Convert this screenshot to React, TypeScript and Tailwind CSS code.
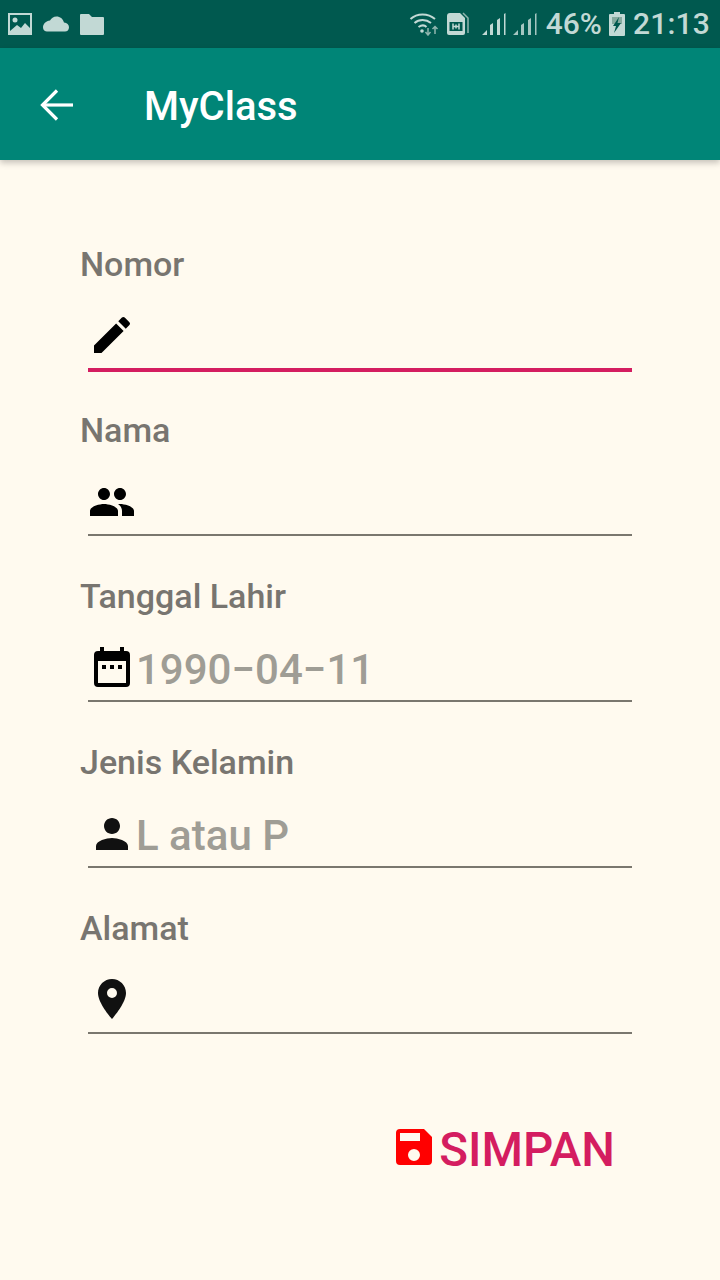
const font = { fontFamily: "Roboto, sans-serif" };

function Field({ label, icon, placeholder, active }: { label: string; icon: React.ReactNode; placeholder?: string; active?: boolean }) {
  return (
    <div className="h-[166px] flex flex-col">
      <div className="h-[40px] shrink-0 pl-[80px] text-[34px] leading-[40px] font-medium text-[#787570]">{label}</div>
      <div className={`ml-[88px] w-[544px] shrink-0 flex items-end ${active ? "h-[88px] pb-[9px] border-b-[4px] border-[#d41d60]" : "h-[86px] pb-[8px] border-b-2 border-[#7a776e]"}`}>
        <div className="w-[48px] h-[48px] flex items-center justify-center shrink-0">{icon}</div>
        {placeholder && <span className="text-[42px] leading-[52px] font-medium text-[#9f9d95] relative top-[4px]">{placeholder}</span>}
      </div>
    </div>
  );
}

const Edit = () => (
  <svg width="48" height="48" viewBox="0 0 24 24" fill="#000"><path d="M3 17.25V21h3.75L17.81 9.94l-3.75-3.75L3 17.25zM20.71 7.04a1 1 0 0 0 0-1.41l-2.34-2.34a1 1 0 0 0-1.41 0l-1.83 1.83 3.75 3.75 1.83-1.83z" /></svg>
);
const People = () => (
  <svg width="48" height="48" viewBox="0 0 24 24" fill="#000"><path d="M16 11c1.66 0 2.99-1.34 2.99-3S17.66 5 16 5s-3 1.34-3 3 1.34 3 3 3zm-8 0c1.66 0 2.99-1.34 2.99-3S9.66 5 8 5 5 6.34 5 8s1.34 3 3 3zm0 2c-2.33 0-7 1.17-7 3.5V19h14v-2.5C15 14.17 10.33 13 8 13zm8 0c-.29 0-.62.02-.97.05 1.16.84 1.97 1.97 1.97 3.45V19h6v-2.5c0-2.33-4.67-3.5-7-3.5z" /></svg>
);
const Calendar = () => (
  <svg width="48" height="48" viewBox="0 0 24 24" fill="#000" className="relative top-[-1px]"><path d="M19 4h-1V2h-2v2H8V2H6v2H5a2 2 0 0 0-2 2v14a2 2 0 0 0 2 2h14a2 2 0 0 0 2-2V6a2 2 0 0 0-2-2zm0 16H5V9h14v11zM7 11h2v2H7v-2zm4 0h2v2h-2v-2zm4 0h2v2h-2v-2z" /></svg>
);
const Person = () => (
  <svg width="48" height="48" viewBox="0 0 24 24" fill="#111"><path d="M12 12c2.21 0 4-1.790 4-4s-1.790-4-4-4-4 1.790-4 4 1.790 4 4 4zm0 2c-2.670 0-8 1.340-8 4v2h16v-2c0-2.660-5.330-4-8-4z" /></svg>
);
const Place = () => (
  <svg width="48" height="48" viewBox="0 0 24 24" fill="#111" className="relative top-[-1px]"><path d="M12 2C8.130 2 5 5.130 5 9c0 5.250 7 13 7 13s7-7.750 7-13c0-3.870-3.130-7-7-7zm0 9.500a2.500 2.500 0 0 1 0-5 2.500 2.500 0 0 1 0 5z" /></svg>
);
const Save = () => (
  <svg width="48" height="48" viewBox="0 0 24 24" fill="#ff0000" className="relative top-[-3px]"><path d="M17 3H5a2 2 0 0 0-2 2v14a2 2 0 0 0 2 2h14a2 2 0 0 0 2-2V7l-4-4zm-5 16a3 3 0 1 1 0-6 3 3 0 0 1 0 6zm3-10H5V5h10v4z" /></svg>
);

function StatusLeft() {
  return (
    <div className="flex items-center gap-[11px] pl-[8px]">
      <svg width="24" height="22" viewBox="0 0 24 22" fill="#c2d9d5"><path fillRule="evenodd" d="M0 0h24v22H0zM2 2v18h20V2z" /><circle cx="7" cy="7" r="2.500" /><path d="M2 18l7-6 4 3 4-5 5 5v5H2z" /></svg>
      <svg width="26" height="16" viewBox="0 0 26 16" fill="#c2d9d5"><path d="M21 6.500C20 2.800 17 .5 13.500.5 10.500.500 8.200 2.200 7 4.600 3 5 0 8 0 11.500 0 14 2 15.500 4 15.500h18c2.300 0 4-1.500 4-4.300C26 8.800 24 6.900 21 6.500z" /></svg>
      <svg width="24" height="21" viewBox="0 0 24 21" fill="#c2d9d5"><path d="M1 0h8l3 3h11a1 1 0 0 1 1 1v16a1 1 0 0 1-1 1H1a1 1 0 0 1-1-1V1a1 1 0 0 1 1-1z" /></svg>
    </div>
  );
}

function StatusRight() {
  return (
    <div className="flex items-center pr-[10px] text-[#c2d9d5]">
      <svg width="30" height="24" viewBox="0 0 30 24" fill="none" stroke="#c2d9d5" strokeWidth="2" className="mr-[7px]">
        <path d="M1.500 7C8 1 19 1 26 7" /><path d="M5.500 11C10 7 17 7 22 11" /><path d="M9.500 15c3-2 6-2 8 0" />
        <circle cx="13" cy="19" r="1.800" fill="#c2d9d5" stroke="none" />
        <path d="M19 16v6M16.500 20l2.500 3 2.500-3M26 22v-7M23.500 17l2.500-2.500 2.500 2.500" stroke="#8fb5ae" strokeWidth="1.500" />
      </svg>
      <svg width="24" height="24" viewBox="0 0 24 24" className="mr-[11px]">
        <path d="M4 1h10l5 5v15a2 2 0 0 1-2 2H3a2 2 0 0 1-2-2V4a3 3 0 0 1 3-3z" fill="#c2d9d5" />
        <path d="M17 1l5 5v15" stroke="#8fb5ae" strokeWidth="1.500" fill="none" />
        <path d="M3.500 10h13v9h-13z" fill="#00594f" />
        <path d="M7 11.500v6M13 11.500v6M7 14.500h6M10 12.500v4" stroke="#c2d9d5" strokeWidth="1.500" fill="none" />
      </svg>
      <svg width="56" height="24" viewBox="0 0 56 24" fill="#c2d9d5" className="mr-[9px]">
        <path d="M1 23l5-5v5zM9 23V13l3-2v12zM16 23V8l3-2v17zM23 23V2l1.500-1v22z" />
        <path d="M32 23l5-5v5zM40 23V13l3-2v12zM47 23V8l3-2v17zM54 23V2l1.500-1v22z" opacity="0.85" />
      </svg>
      <span className="text-[30px] leading-[46px] font-medium">46%</span>
      <svg width="16" height="24" viewBox="0 0 16 24" className="ml-[7px] mr-[8px]">
        <path d="M5 0h6v2h4a1 1 0 0 1 1 1v20a1 1 0 0 1-1 1H1a1 1 0 0 1-1-1V3a1 1 0 0 1 1-1h4z" fill="#c2d9d5" />
        <path d="M3 5h10v7H3z" fill="#86ab9f" />
        <path d="M10 5L4 14h3l-2 7 7-10H8.500z" fill="#00594f" />
      </svg>
      <span className="text-[30px] leading-[46px] font-medium tracking-[0.2px]">21:13</span>
    </div>
  );
}

export default function App() {
  return (
    <div style={font} className="w-[720px] h-[1280px] bg-[#fffaef] flex flex-col overflow-hidden">
      <div className="h-[48px] bg-[#00594f] flex items-center justify-between shrink-0">
        <StatusLeft />
        <StatusRight />
      </div>
      <div className="h-[112px] bg-[#008577] flex items-center shrink-0 shadow-[0_3px_6px_rgba(0,0,0,0.22)] relative">
        <div className="w-[144px] pl-[40px] shrink-0 pt-[1px]">
          <svg width="34" height="32" viewBox="0 0 34 32" fill="none" stroke="#fff" strokeWidth="3.200">
            <path d="M33 16H3" /><path d="M17 1.500L2.500 16 17 30.500" />
          </svg>
        </div>
        <div className="text-[40px] leading-[48px] font-medium text-white pt-[6px] h-[54px]">MyClass</div>
      </div>
      <div className="pt-[84px]">
        <Field label="Nomor" icon={<Edit />} active />
        <Field label="Nama" icon={<People />} />
        <Field label="Tanggal Lahir" icon={<Calendar />} placeholder="1990−04−11" />
        <Field label="Jenis Kelamin" icon={<Person />} placeholder="L atau P" />
        <Field label="Alamat" icon={<Place />} />
        <div className="flex items-center justify-end pr-[105px] pt-[50px]">
          <Save />
          <span className="text-[47.5px] leading-[52px] font-medium text-[#d41d60] ml-[1px]">SIMPAN</span>
        </div>
      </div>
    </div>
  );
}
